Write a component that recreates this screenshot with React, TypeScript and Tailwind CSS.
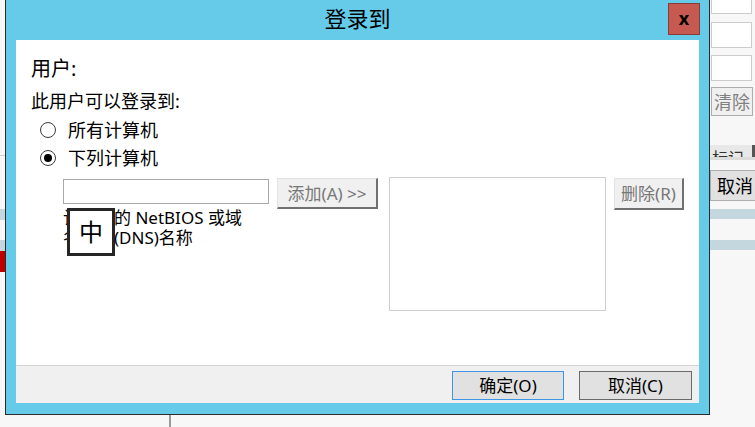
import React from 'react';

const font = "font-['Noto_Sans','Noto_Sans_CJK_SC',sans-serif]";

function Radio({ checked, label }: { checked?: boolean; label: string }) {
  return (
    <div className="flex h-[28px] items-center gap-[12px]">
      <span className="flex h-[16px] w-[16px] items-center justify-center rounded-full border border-[#3a3a3a] bg-white">
        {checked && <span className="h-[8px] w-[8px] rounded-full bg-black" />}
      </span>
      <span className="text-[18px] leading-[22px] text-black">{label}</span>
    </div>
  );
}

function OldButton({ label, className }: { label: string; className: string }) {
  return (
    <div
      className={`flex items-center justify-center border-t border-l border-t-[#e3e3e3] border-l-[#e3e3e3] border-r-2 border-b-2 border-r-[#707070] border-b-[#707070] bg-[#f0f0f0] text-[17px] leading-none text-[#777777] ${className}`}
    >
      {label}
    </div>
  );
}

function LeftStrip() {
  return (
    <div className="flex w-[5px] shrink-0 flex-col bg-[#f7f7f7]">
      <div className="h-[155px]" />
      <div className="h-[1px] bg-[#d0d0d0]" />
      <div className="h-[53px]" />
      <div className="h-[11px] bg-[#c4d7de]" />
      <div className="h-[20px]" />
      <div className="h-[11px] bg-[#c4d7de]" />
      <div className="h-[21px] bg-[#c00000]" />
    </div>
  );
}

function RightStrip() {
  return (
    <div className="flex w-[45px] shrink-0 flex-col bg-[#f7f7f7]">
      <div className="ml-[1px] h-[14px] w-[41px] border-x border-b border-[#cccccc] bg-white" />
      <div className="mt-[8px] ml-[1px] h-[26px] w-[41px] border border-[#cccccc] bg-white" />
      <div className="mt-[7px] ml-[1px] h-[26px] w-[41px] border border-[#cccccc] bg-white" />
      <div className="mt-[6px] ml-[1px] flex h-[29px] w-[42px] items-center justify-center border border-[#adadad] bg-[#f0f0f0] text-[18px] leading-none text-[#808080]">
        清除
      </div>
      <div className="mt-[29px] flex h-[12px] overflow-hidden bg-[#e8e8e8]">
        <span className="flex-1 pl-[2px] text-[16px] leading-[26px] text-[#333]">标记</span>
        <span className="w-[3px] bg-[#555]" />
      </div>
      <div className="h-[3px] bg-[#dcdcdc]" />
      <div className="mt-[10px] flex h-[31px] items-center border-y border-l border-[#adadad] bg-[#e1e1e1] pl-[6px] text-[18px] leading-none whitespace-nowrap text-black">
        取消
      </div>
      <div className="mt-[8px] h-[10px] bg-[#c4d7de]" />
      <div className="mt-[21px] h-[10px] bg-[#c4d7de]" />
    </div>
  );
}

function Dialog() {
  return (
    <div className="flex h-[415px] flex-col border-x border-b border-[#2b2b2b] bg-[#66cae9]">
      <div className="grid h-[40px] grid-cols-[1fr_auto_1fr]">
        <div />
        <div className="text-[22px] leading-[36px] text-black">登录到</div>
        <div className="flex justify-end pr-[9px]">
          <div className="mt-[3px] flex h-[32px] w-[32px] items-center justify-center border border-[#8a3b36] bg-[#c75a50] pb-[3px] text-[18px] font-bold leading-none text-black">
            x
          </div>
        </div>
      </div>
      <div className="flex flex-1 flex-col px-[10px] pb-[11px]">
        <div className="h-[325px] bg-white pt-[18px] pl-[15px]">
          <div className="text-[20px] leading-[22px] text-black">用户:</div>
          <div className="mt-[10px] text-[18px] leading-[22px] text-black">此用户可以登录到:</div>
          <div className="mt-[4px] pl-[9px]">
            <Radio label="所有计算机" />
            <Radio checked label="下列计算机" />
          </div>
          <div className="mt-[5px] ml-[32px] flex items-start">
            <div className="relative mt-[2px] w-[206px]">
              <div className="h-[25px] border border-[#a9a9a9] bg-white" />
              <div className="mt-[4px] text-[17px] leading-[20px] whitespace-nowrap text-black">
                计算机的 NetBIOS 或域
                <br />
                名系统(DNS)名称
              </div>
              <div className="absolute top-[29px] left-[4px] flex h-[48px] w-[48px] items-center justify-center border-[3px] border-[#262626] bg-white text-[24px] leading-none text-black">
                中
              </div>
            </div>
            <OldButton label="添加(A) >>" className="mt-[1px] ml-[8px] h-[31px] w-[101px]" />
            <div className="ml-[11px] h-[134px] w-[217px] border border-[#cfcfcf] bg-white" />
            <OldButton label="删除(R)" className="mt-[1px] ml-[8px] h-[32px] w-[70px]" />
          </div>
        </div>
        <div className="flex flex-1 items-start justify-end gap-[15px] border-t border-[#d4d4d4] bg-[#f0f0f0] pt-[5px] pr-[7px]">
          <div className="flex h-[29px] w-[112px] items-center justify-center border border-[#3d95e4] bg-[#e1e1e1] text-[17px] leading-none text-black">
            确定(O)
          </div>
          <div className="flex h-[29px] w-[113px] items-center justify-center border border-[#6a6a6a] bg-[#e1e1e1] text-[17px] leading-none text-black">
            取消(C)
          </div>
        </div>
      </div>
    </div>
  );
}

export default function App() {
  return (
    <div className={`flex h-[427px] w-[755px] overflow-hidden bg-[#f7f7f7] ${font}`}>
      <LeftStrip />
      <div className="flex w-[705px] shrink-0 flex-col">
        <Dialog />
        <div className="flex flex-1 pl-[164px]">
          <div className="w-[2px] bg-[#9a9a9a]" />
        </div>
      </div>
      <RightStrip />
    </div>
  );
}
